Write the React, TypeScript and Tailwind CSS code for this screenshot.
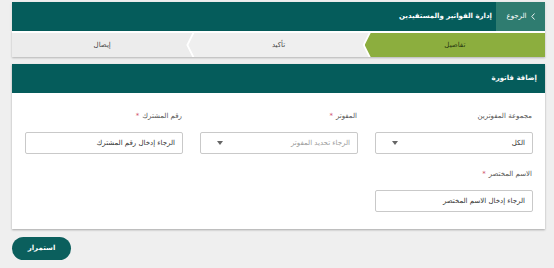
import React from "react";

const font = { fontFamily: '"DejaVu Sans", "Noto Sans", sans-serif' };

function Field({ label, required, placeholder, value, select }: { label: string; required?: boolean; placeholder?: string; value?: string; select?: boolean }) {
  return (
    <div className="flex flex-col">
      <div className="h-[16px] flex items-center pr-[1px] text-[7px] text-[#555]">
        <span>{label}</span>
        {required && <span className="text-[#d0506a] mr-[3px]">*</span>}
      </div>
      <div className="mt-[8px] h-[22px] border border-[#c9c9c9] rounded-[2px] bg-white flex items-center justify-between px-[7px]">
        <span className={value ? "text-[7px] text-[#333]" : "text-[7px] text-[#9a9a9a]"}>{value ?? placeholder}</span>
        {select && (
          <svg width="6" height="4" viewBox="0 0 6 4" className="ml-[9px]">
            <path d="M0 0 L6 0 L3 4 Z" fill="#666" />
          </svg>
        )}
      </div>
    </div>
  );
}

export default function App() {
  return (
    <div dir="rtl" style={font} className="w-[554px] h-[268px] bg-[#efefef] overflow-hidden pt-[2px] px-[9px] pl-[12px]">
      {/* Top bar */}
      <div className="flex h-[29px] bg-[#055c5b] text-white shadow-sm">
        <div className="w-[49px] bg-[#2f7c70] flex items-center justify-center gap-[4px] text-[7px]">
          <svg width="4" height="7" viewBox="0 0 4 7">
            <path d="M3.5 0.5 L0.8 3.5 L3.5 6.5" fill="none" stroke="white" strokeWidth="0.9" />
          </svg>
          <span>الرجوع</span>
        </div>
        <div className="flex items-center pr-[4px] text-[7px] font-bold">إدارة الفواتير والمستفيدين</div>
      </div>
      {/* Stepper */}
      <div className="flex h-[26px] bg-white pt-[2px] shadow-[0_1px_2px_rgba(0,0,0,0.25)]">
        <div className="flex-1 bg-[#8cae3e] flex items-center justify-center text-[7px] text-[#2b3a12] [clip-path:polygon(100%_0,6px_0,0_50%,6px_100%,100%_100%)]">تفاصيل</div>
        <div className="flex-1 -mr-[4px] bg-[#efefef] flex items-center justify-center text-[7px] text-[#444] [clip-path:polygon(100%_0,6px_0,0_50%,6px_100%,100%_100%,calc(100%_-_6px)_50%)]">تأكيد</div>
        <div className="flex-1 -mr-[4px] bg-[#ececec] flex items-center justify-center text-[7px] text-[#444] [clip-path:polygon(100%_0,0_0,0_100%,100%_100%,calc(100%_-_6px)_50%)]">إيصال</div>
      </div>
      {/* Card */}
      <div className="mt-[7px] bg-white shadow-[0_1px_2px_rgba(0,0,0,0.3)]">
        <div className="h-[29px] bg-[#055c5b] flex items-center pr-[8px] text-white text-[7px] font-bold">إضافة فاتورة</div>
        <div className="px-[12px] pl-[13px] pt-[15px] pb-[17px]">
          <div className="grid grid-cols-3 gap-x-[17px]">
            <Field label="مجموعة المفوترين" value="الكل" select />
            <Field label="المفوتر" required placeholder="الرجاء تحديد المفوتر" select />
            <Field label="رقم المشترك" required value="الرجاء إدخال رقم المشترك" />
          </div>
          <div className="grid grid-cols-3 gap-x-[17px] mt-[12px]">
            <Field label="الاسم المختصر" required value="الرجاء إدخال الاسم المختصر" />
          </div>
        </div>
      </div>
      {/* Button */}
      <div className="flex justify-end mt-[8px]">
        <button className="w-[59px] h-[23px] rounded-full bg-[#0b5f5d] text-white text-[7px] font-bold">استمرار</button>
      </div>
    </div>
  );
}
